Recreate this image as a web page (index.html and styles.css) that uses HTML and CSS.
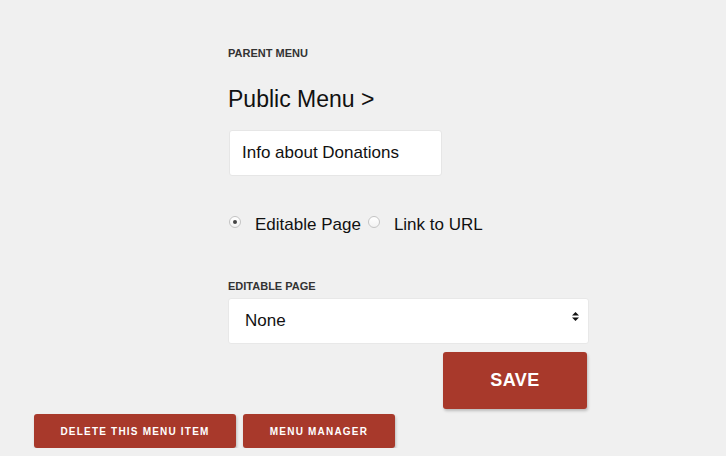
FILE: index.html
```html
<!DOCTYPE html>
<html lang="en">
<head>
    <meta charset="UTF-8">
    <title>Edit Menu Item</title>
    <link rel="stylesheet" href="styles.css">
</head>
<body>
    <div class="menu-form">
        <div class="field-label">Parent Menu</div>
        <div class="parent-path">Public Menu &gt;</div>

        <input type="text" class="text-field" value="Info about Donations">

        <div class="link-type">
            <span class="radio checked"></span>
            <span class="radio-text">Editable Page</span>
            <span class="radio"></span>
            <span class="radio-text">Link to URL</span>
        </div>

        <div class="field-label page-label">Editable Page</div>
        <div class="select-field">
            <span>None</span>
            <svg class="select-arrows" width="7" height="9" viewBox="0 0 7 9">
                <path d="M3.5 0 L7 3.6 L0 3.6 Z" fill="#111"/>
                <path d="M0 5.4 L7 5.4 L3.5 9 Z" fill="#111"/>
            </svg>
        </div>

        <div class="save-row">
            <button class="btn btn-save">Save</button>
        </div>
    </div>

    <div class="bottom-actions">
        <button class="btn btn-small btn-delete">Delete this menu item</button>
        <button class="btn btn-small btn-manager">Menu Manager</button>
    </div>
</body>
</html>
```

FILE: styles.css
```css
body {
    margin: 0;
    background-color: #f0f0f0;
    font-family: "Liberation Sans", Arial, sans-serif;
    color: #111;
}

.menu-form {
    margin-left: 228px;
    width: 361px;
    padding-top: 47px;
}

.field-label {
    font-size: 11px;
    line-height: 13px;
    font-weight: bold;
    text-transform: uppercase;
    color: #333;
}

.parent-path {
    margin-top: 26px;
    font-size: 23px;
    line-height: 26px;
}

.text-field {
    display: block;
    box-sizing: border-box;
    margin: 18px 0 0 1px;
    width: 213px;
    height: 46px;
    padding: 0 12px;
    border: 1px solid #e6e6e6;
    border-radius: 3px;
    background: #fff;
    font-family: inherit;
    font-size: 17px;
    color: #111;
    outline: none;
}

.link-type {
    display: flex;
    align-items: center;
    margin-top: 39px;
    margin-left: 1px;
    font-size: 17px;
    line-height: 20px;
}

.radio {
    box-sizing: border-box;
    width: 12px;
    height: 12px;
    margin-bottom: 6px;
    border: 1px solid #c4c4c4;
    border-radius: 50%;
    background: linear-gradient(#fff, #f2f2f2);
    display: flex;
    align-items: center;
    justify-content: center;
}

.radio.checked::after {
    content: "";
    width: 4px;
    height: 4px;
    border-radius: 50%;
    background: #444;
}

.radio-text {
    margin-left: 14px;
    margin-right: 7px;
}

.page-label {
    margin-top: 45px;
}

.select-field {
    box-sizing: border-box;
    display: flex;
    align-items: center;
    justify-content: space-between;
    margin-top: 5px;
    height: 46px;
    padding: 0 9px 0 16px;
    border: 1px solid #e8e8e8;
    border-radius: 3px;
    background: #fff;
    font-size: 17px;
}

.select-arrows {
    margin-bottom: 9px;
}

.save-row {
    display: flex;
    justify-content: flex-end;
    margin-top: 8px;
    padding-right: 2px;
}

.btn {
    border: none;
    border-radius: 3px;
    background-color: #a8392b;
    color: #fff;
    font-family: inherit;
    font-weight: bold;
    text-transform: uppercase;
    box-shadow: 1px 2px 3px rgba(0, 0, 0, 0.22);
    cursor: pointer;
}

.btn-save {
    width: 144px;
    height: 57px;
    font-size: 18px;
    letter-spacing: 0.5px;
}

.bottom-actions {
    display: flex;
    gap: 7px;
    margin-top: 5px;
    padding-left: 34px;
}

.btn-small {
    height: 34px;
    font-size: 10px;
    letter-spacing: 1.2px;
}

.btn-delete {
    width: 202px;
}

.btn-manager {
    width: 152px;
}
```
